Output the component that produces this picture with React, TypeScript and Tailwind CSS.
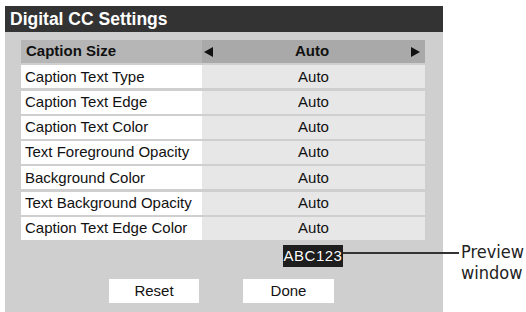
const rows = [
  'Caption Text Type',
  'Caption Text Edge',
  'Caption Text Color',
  'Text Foreground Opacity',
  'Background Color',
  'Text Background Opacity',
  'Caption Text Edge Color',
];

const font = { fontFamily: '"Liberation Sans", Arial, sans-serif' };

export default function App() {
  return (
    <div className="relative h-[312px] w-[526px] overflow-hidden bg-white text-[#111]" style={font}>
      <div className="ml-[5px] mt-[6px] flex h-[306px] w-[438px] flex-col bg-[#cfcfcf]">
        <div className="flex h-[26px] items-center bg-[#333333] pl-[5px] text-[17.5px] font-bold text-white">
          Digital CC Settings
        </div>
        <div className="ml-[16px] mt-[8px] flex w-[404px] flex-col gap-[2.3px] text-[15px]">
          <div className="flex h-[23px]">
            <div className="flex w-[181px] items-center bg-[#b6b6b6] pl-[5px] font-bold">Caption Size</div>
            <div className="flex flex-1 items-center justify-between bg-[#a9a9a9] pl-[2px] pr-[5px] font-bold">
              <svg width="9" height="10" viewBox="0 0 9 10">
                <path d="M0 5 L9 0 L9 10 Z" fill="#111" />
              </svg>
              <span>Auto</span>
              <svg width="9" height="10" viewBox="0 0 9 10">
                <path d="M9 5 L0 0 L0 10 Z" fill="#111" />
              </svg>
            </div>
          </div>
          {rows.map((r) => (
            <div key={r} className="flex h-[23px]">
              <div className="flex w-[181px] items-center bg-white pl-[4px]">{r}</div>
              <div className="flex flex-1 items-center justify-center bg-[#e7e7e7]">Auto</div>
            </div>
          ))}
        </div>
        <div className="ml-[278px] mt-[5px] flex h-[22px] w-[60px] items-center justify-center bg-[#1e1e1e] text-[15px] tracking-[0.5px] text-white [text-shadow:0_0_1px_#000]">
          ABC123
        </div>
        <div className="mt-[12px] flex gap-[44px] pl-[104px] text-[15px]">
          <div className="flex h-[24px] w-[90px] items-center justify-center bg-white">Reset</div>
          <div className="flex h-[24px] w-[91px] items-center justify-center bg-white">Done</div>
        </div>
      </div>
      <div className="absolute left-[343px] top-[252px] h-[1.5px] w-[116px] bg-[#333]" />
      <div
        className="absolute left-[461px] top-[241px] text-[18px] leading-[21px] text-[#222]"
        style={{ fontFamily: '"DejaVu Sans Condensed", "Liberation Sans Narrow", sans-serif', fontStretch: 'condensed' }}
      >
        <div>Preview</div>
        <div>window</div>
      </div>
    </div>
  );
}
